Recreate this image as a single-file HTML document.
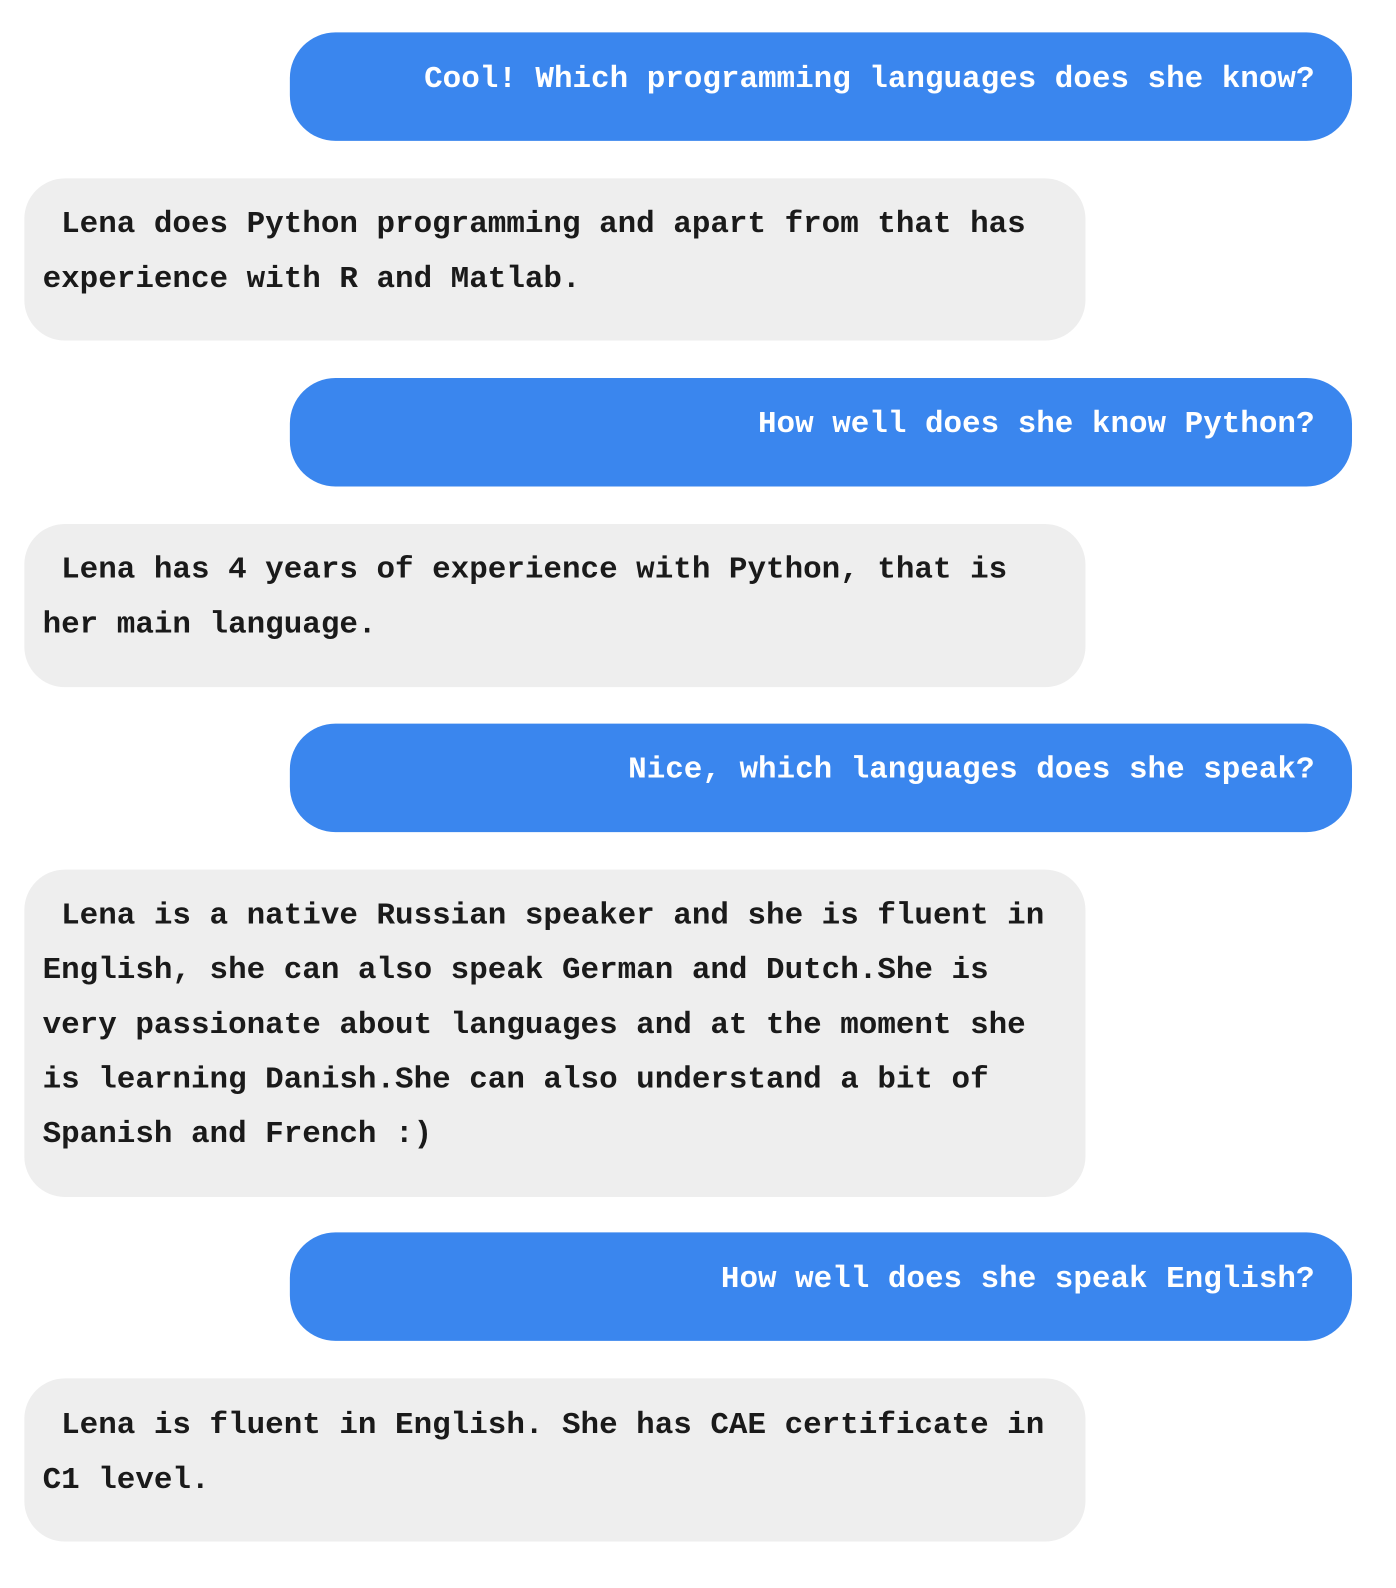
<!DOCTYPE html>
<html style="overflow:hidden;width:1396px;height:1588px;margin:0;padding:0"><head><style>
body{margin:0;width:1396px;height:1588px;overflow:hidden;background:#fff;position:relative;}
#w{position:absolute;left:0;top:0;width:1396px;height:1588px;transform:scale(1.0135);transform-origin:0 0;font-family:"Liberation Mono","Courier New",monospace;font-weight:bold;font-size:30.5px;}
.b{position:absolute;left:286px;width:1048px;height:107px;background:#3a86ee;border-radius:45px;}
.g{position:absolute;left:24px;width:1047px;background:#eeeeee;border-radius:40px;}
.t{position:absolute;white-space:pre;line-height:54px;}
.bt{color:#fff;left:286px;width:1011px;text-align:right}
.gt{color:#1a1a1a;left:42px}
</style></head><body><div id="w">
<div class="b" style="top:32px"></div>
<div class="t bt" style="top:52px">Cool! Which programming languages does she know?</div>
<div class="g" style="top:176px;height:160px"></div>
<div class="t gt" style="top:195px"> Lena does Python programming and apart from that has
experience with R and Matlab.</div>
<div class="b" style="top:373px"></div>
<div class="t bt" style="top:392px">How well does she know Python?</div>
<div class="g" style="top:517px;height:161px"></div>
<div class="t gt" style="top:536px"> Lena has 4 years of experience with Python, that is
her main language.</div>
<div class="b" style="top:714px"></div>
<div class="t bt" style="top:733px">Nice, which languages does she speak?</div>
<div class="g" style="top:858px;height:323px"></div>
<div class="t gt" style="top:877px"> Lena is a native Russian speaker and she is fluent in
English, she can also speak German and Dutch.She is
very passionate about languages and at the moment she
is learning Danish.She can also understand a bit of
Spanish and French :)</div>
<div class="b" style="top:1216px"></div>
<div class="t bt" style="top:1236px">How well does she speak English?</div>
<div class="g" style="top:1360px;height:161px"></div>
<div class="t gt" style="top:1380px"> Lena is fluent in English. She has CAE certificate in
C1 level.</div>
</div></body></html>
